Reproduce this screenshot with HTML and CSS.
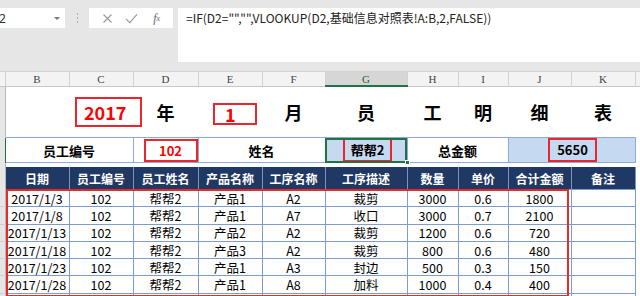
FILE: index.html
```html
<!DOCTYPE html>
<html>
<head>
<meta charset="utf-8">
<link rel="stylesheet" href="styles.css">
</head>
<body>
<div class="app">
  <div class="fbar">
    <div class="namebox"><span class="nb-text">2</span><span class="nb-arrow"></span></div>
    <div class="sep"><i></i><i></i><i></i></div>
    <div class="fxbox">
      <span class="fx-btn">
        <svg width="11" height="11" viewBox="0 0 11 11"><path d="M1.5 1.5 L9.5 9.5 M9.5 1.5 L1.5 9.5" stroke="#9a9a9a" stroke-width="1.1" fill="none"/></svg>
      </span>
      <span class="fx-btn">
        <svg width="13" height="11" viewBox="0 0 13 11"><path d="M1 6 L4.8 9.6 L12 1.4" stroke="#9a9a9a" stroke-width="1.1" fill="none"/></svg>
      </span>
      <span class="fx-btn fx-text">f<sub>x</sub></span>
    </div>
    <div class="formula">=IF(D2="","",VLOOKUP(D2,基础信息对照表!A:B,2,FALSE))</div>
  </div>
  <div class="sheetwrap">
    <table class="sheet">
      <colgroup>
        <col class="c-rh"><col class="c-b"><col class="c-c"><col class="c-d"><col class="c-e"><col class="c-f"><col class="c-g"><col class="c-h"><col class="c-i"><col class="c-j"><col class="c-k"><col class="c-l">
      </colgroup>
      <tr class="colhead">
        <td class="rh"></td><td>B</td><td>C</td><td>D</td><td>E</td><td>F</td><td class="sel">G</td><td>H</td><td>I</td><td>J</td><td>K</td><td></td>
      </tr>
      <tr class="title">
        <td class="rh"></td>
        <td></td>
        <td class="left"><span class="rbox year">2017</span></td>
        <td>年</td>
        <td class="left"><span class="rbox month">1</span></td>
        <td>月</td>
        <td>员</td>
        <td>工</td>
        <td>明</td>
        <td>细</td>
        <td>表</td>
        <td class="blank"></td>
      </tr>
      <tr class="info">
        <td class="rh rh-sel"></td>
        <td colspan="2">员工编号</td>
        <td><span class="rbox idbox">102</span></td>
        <td colspan="2">姓名</td>
        <td class="fill active"><span class="rbox namebx">帮帮2</span><span class="handle"></span></td>
        <td colspan="2">总金额</td>
        <td colspan="2" class="fill"><span class="rbox totbox">5650</span></td>
        <td class="blank"></td>
      </tr>
      <tr class="spacer">
        <td class="rh"></td><td colspan="10"></td><td class="blank"></td>
      </tr>
      <tr class="thead">
        <td class="rh"></td>
        <td>日期</td><td>员工编号</td><td>员工姓名</td><td>产品名称</td><td>工序名称</td><td>工序描述</td><td>数量</td><td>单价</td><td>合计金额</td><td>备注</td>
        <td class="blank"></td>
      </tr>
      <tr class="data"><td class="rh"></td><td>2017/1/3</td><td>102</td><td>帮帮2</td><td>产品1</td><td>A2</td><td>裁剪</td><td>3000</td><td>0.6</td><td>1800</td><td></td><td class="blank"></td></tr>
      <tr class="data"><td class="rh"></td><td>2017/1/8</td><td>102</td><td>帮帮2</td><td>产品1</td><td>A7</td><td>收口</td><td>3000</td><td>0.7</td><td>2100</td><td></td><td class="blank"></td></tr>
      <tr class="data"><td class="rh"></td><td>2017/1/13</td><td>102</td><td>帮帮2</td><td>产品2</td><td>A2</td><td>裁剪</td><td>1200</td><td>0.6</td><td>720</td><td></td><td class="blank"></td></tr>
      <tr class="data"><td class="rh"></td><td>2017/1/18</td><td>102</td><td>帮帮2</td><td>产品3</td><td>A2</td><td>裁剪</td><td>800</td><td>0.6</td><td>480</td><td></td><td class="blank"></td></tr>
      <tr class="data"><td class="rh"></td><td>2017/1/23</td><td>102</td><td>帮帮2</td><td>产品1</td><td>A3</td><td>封边</td><td>500</td><td>0.3</td><td>150</td><td></td><td class="blank"></td></tr>
      <tr class="data"><td class="rh"></td><td>2017/1/28</td><td>102</td><td>帮帮2</td><td>产品1</td><td>A8</td><td>加料</td><td>1000</td><td>0.4</td><td>400</td><td></td><td class="blank"></td></tr>
      <tr class="data"><td class="rh"></td><td></td><td></td><td></td><td></td><td></td><td></td><td></td><td></td><td></td><td></td><td class="blank"></td></tr>
    </table>
    <div class="hl"></div>
  </div>
</div>
</body>
</html>
```

FILE: styles.css
```css
html, body {
  margin: 0;
  padding: 0;
  background: #fff;
}
body {
  font-family: "Noto Sans CJK SC", "Noto Sans", sans-serif;
  color: #000;
}
.app {
  width: 640px;
  height: 296px;
  overflow: hidden;
  position: relative;
}

/* formula bar */
.fbar {
  height: 71px;
  background: #e6e6e6;
  display: flex;
  align-items: flex-start;
  padding-top: 8px;
  box-sizing: border-box;
}
.namebox {
  width: 65px;
  height: 20px;
  background: #fff;
  display: flex;
  align-items: center;
  justify-content: space-between;
  box-sizing: border-box;
  padding-right: 5px;
  flex: none;
}
.nb-text {
  font-family: "Noto Sans", sans-serif;
  font-size: 12px;
  color: #333;
  margin-left: -1px;
}
.nb-arrow {
  width: 0;
  height: 0;
  border-left: 3px solid transparent;
  border-right: 3px solid transparent;
  border-top: 3px solid #777;
}
.sep {
  width: 24px;
  height: 20px;
  display: flex;
  flex-direction: column;
  align-items: center;
  justify-content: center;
  gap: 2px;
  flex: none;
}
.sep i {
  width: 1px;
  height: 2px;
  background: #b0b0b0;
  display: block;
}
.fxbox {
  width: 84px;
  height: 20px;
  background: #fff;
  display: flex;
  align-items: center;
  justify-content: space-around;
  padding: 0 4px 0 6px;
  box-sizing: border-box;
  flex: none;
}
.fx-btn {
  display: flex;
  align-items: center;
  justify-content: center;
  width: 22px;
}
.fx-text {
  font-family: "Liberation Serif", serif;
  font-style: italic;
  font-size: 12px;
  color: #666;
}
.fx-text sub {
  font-size: 8px;
  vertical-align: -1px;
}
.formula {
  flex: 1;
  margin-left: 5px;
  height: 54px;
  background: #fff;
  font-size: 12px;
  color: #222;
  padding: 1px 0 0 8px;
  box-sizing: border-box;
  line-height: 18px;
  white-space: nowrap;
}

/* sheet */
.sheetwrap {
  position: relative;
}
.sheet {
  width: 640px;
  table-layout: fixed;
  border-collapse: collapse;
}
.sheet td {
  padding: 0;
  text-align: center;
  overflow: visible;
  white-space: nowrap;
}
.c-rh { width: 5px; }
.c-b { width: 64px; }
.c-c { width: 64px; }
.c-d { width: 65px; }
.c-e { width: 64px; }
.c-f { width: 63px; }
.c-g { width: 82px; }
.c-h { width: 51px; }
.c-i { width: 50px; }
.c-j { width: 63px; }
.c-k { width: 64px; }
.c-l { width: 5px; }

.rh {
  background: #e6e6e6;
  border-right: 1px solid #b9b9b9;
}
.rh-sel {
  border-right: 1px solid #217346;
}

.colhead td {
  height: 13px;
  background: #f3f3f3;
  border-right: 1px solid #d2d2d2;
  border-top: 1px solid #d2d2d2;
  border-bottom: 1px solid #c8c8c8;
  font-family: "Liberation Serif", serif;
  font-size: 11px;
  line-height: 12px;
  color: #444;
}
.colhead td.sel {
  background: #d6d6d6;
  color: #1e5e37;
  border-bottom: 2px solid #217346;
}

.title td {
  height: 50px;
  font-size: 18px;
  font-weight: bold;
  line-height: 24px;
}
.title td.left {
  text-align: left;
}
.rbox {
  display: inline-block;
  border: 2px solid #e8262f;
  box-sizing: border-box;
  vertical-align: middle;
}
.year {
  margin-left: 6px;
  width: 67px;
  height: 30px;
  line-height: 26px;
  color: #f00;
  padding-left: 7px;
  text-align: left;
}
.month {
  margin-left: 15px;
  width: 44px;
  height: 22px;
  line-height: 18px;
  color: #f00;
  padding-left: 10px;
  text-align: left;
}

.info td {
  height: 23px;
  border: 1px solid #8eaadb;
  font-size: 13px;
  font-weight: bold;
}
.info td.rh {
  border: none;
  border-right: 1px solid #217346;
}
.info td.fill {
  background: #c5d9f1;
}
.info td.active {
  position: relative;
  outline: 2px solid #217346;
  outline-offset: -2px;
}
.handle {
  position: absolute;
  right: -3px;
  bottom: -3px;
  width: 5px;
  height: 5px;
  background: #217346;
  border: 1px solid #fff;
  box-sizing: border-box;
}
.idbox {
  margin-left: 10px;
  width: 54px;
  height: 23px;
  line-height: 19px;
  color: #f00;
}
.namebx {
  width: 49px;
  height: 24px;
  line-height: 20px;
  margin-left: 3px;
}
.totbox {
  width: 49px;
  height: 24px;
  line-height: 20px;
  margin-left: 2px;
}
.info td.blank, .title td.blank, .spacer td.blank, .thead td.blank, .data td.blank {
  border: none;
  background: #fff;
}

.spacer td {
  height: 4px;
  border: none;
}
.spacer td.rh {
  border-right: 1px solid #b9b9b9;
}

.thead td {
  height: 22px;
  background: #1f3864;
  color: #fff;
  font-size: 12px;
  font-weight: bold;
  border-right: 1px solid #7f95b8;
}
.thead td.rh {
  background: #e6e6e6;
  border-right: 1px solid #b9b9b9;
}

.data td {
  height: 16.3px;
  border: 1px solid #7d9cd0;
  font-size: 12.5px;
  line-height: 15px;
}
.data td.rh {
  border: none;
  border-right: 1px solid #b9b9b9;
  border-bottom: 1px solid #d0d0d0;
}

.hl {
  position: absolute;
  left: 6px;
  top: 118px;
  width: 563px;
  height: 108px;
  border: 2px solid #e52a2a;
  box-sizing: border-box;
  pointer-events: none;
}
```
